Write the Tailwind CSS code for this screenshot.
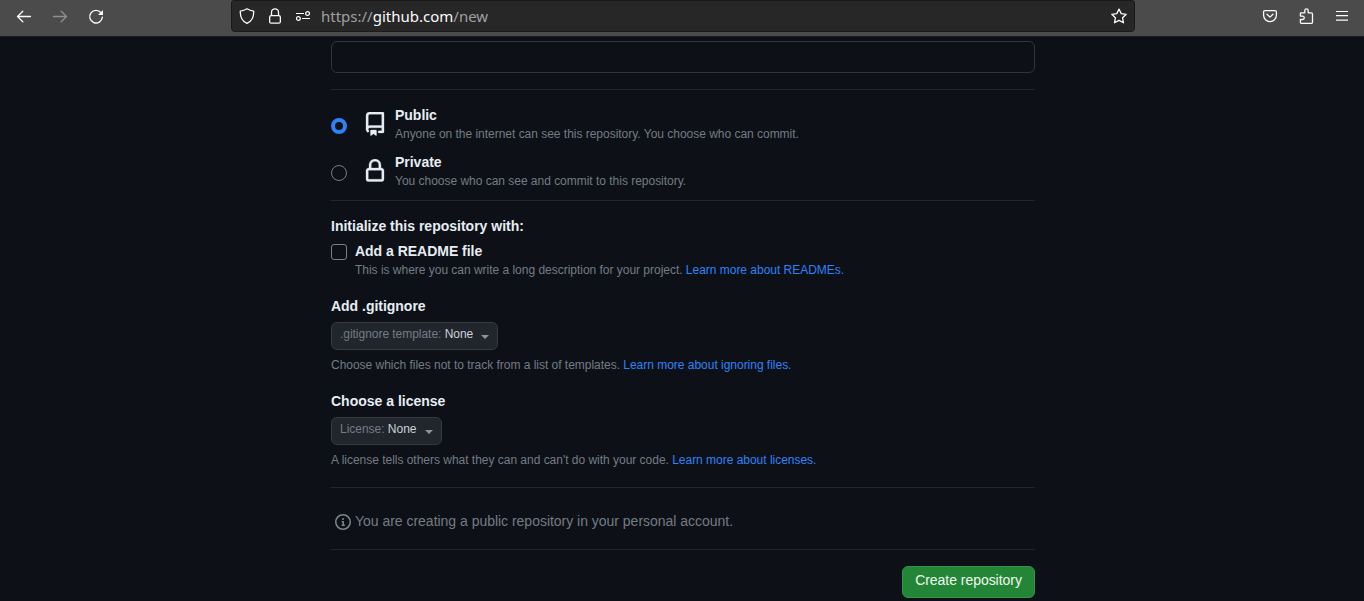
<!DOCTYPE html>
<html lang="en">
<head>
<meta charset="utf-8">
<title>Create a new repository</title>
<script src="https://cdn.jsdelivr.net/npm/@tailwindcss/browser@4"></script>
</head>
<body class="h-[601px] overflow-hidden bg-[#0d1117] font-['Liberation_Sans',Arial,sans-serif] text-[#e6edf3]">
<header class="flex h-[37px] border-b border-[#1c1c1e] bg-[#4b4b4b] text-[#fbfbfe]">
  <nav class="flex w-[231px] gap-5 pl-4 pt-[9px]">
    <svg class="size-4" viewBox="0 0 16 16" fill="none" stroke="currentColor" stroke-width="1.3" stroke-linecap="round" stroke-linejoin="round"><path d="M14.500 7.500H1.500M6.800 2.300 1.500 7.500l5.300 5.200"/></svg>
    <svg class="size-4 text-[#909090]" viewBox="0 0 16 16" fill="none" stroke="currentColor" stroke-width="1.3" stroke-linecap="round" stroke-linejoin="round"><path d="M1.500 7.500H14.500M9.200 2.300l5.300 5.200-5.300 5.200"/></svg>
    <svg class="size-4" viewBox="0 0 16 16" fill="none" stroke="currentColor" stroke-width="1.4" stroke-linecap="round"><path d="M13 3.800A6.300 6.300 0 1 0 14.300 8.300"/><path d="M15 1v5h-5Z" fill="currentColor" stroke="none"/></svg>
  </nav>
  <div class="flex h-8 w-[904px] rounded-b-[4px] rounded-t-[3px] border border-[#191919] bg-[#272727] pl-[7px]">
    <svg class="mt-[7px] size-4" viewBox="0 0 16 16" fill="none" stroke="currentColor" stroke-width="1.3" stroke-linejoin="round"><path d="M8 .8c2 1.300 4.300 2 6.700 2.300.2 5.500-1.700 10-6.700 12.200C3 13.100 1.100 8.600 1.300 3.100 3.700 2.800 6 2.100 8 .8Z"/></svg>
    <svg class="ml-3 mt-[7px] size-4" viewBox="0 0 16 16" fill="none" stroke="currentColor" stroke-width="1.3"><rect x="2.650" y="7.650" width="10.700" height="7.500" rx="1.500"/><path d="M4.500 7.500V4.300a3.500 3.500 0 0 1 7 0v3.200"/></svg>
    <svg class="ml-3 mt-[7px] size-4" viewBox="0 0 16 16" fill="none" stroke="currentColor" stroke-width="1.200"><path d="M1 5.500h8M7 10.500h8"/><circle cx="12.600" cy="5.500" r="1.900"/><circle cx="3.400" cy="10.500" r="1.900"/></svg>
    <div class="ml-[10px] mt-[4px] font-['Noto_Sans',sans-serif] text-[15px] leading-[22px] text-[#a0a0a2]">https://<span class="text-[#fbfbfe]">github.com</span>/new</div>
    <svg class="ml-auto mr-[7px] mt-[7px] size-4" viewBox="0 0 16 16" fill="none" stroke="currentColor" stroke-width="1.3" stroke-linejoin="round"><path d="m8 1.100 2.200 4.500 5 .7-3.600 3.500.9 5L8 12.400l-4.500 2.400.9-5L.8 6.300l5-.7Z"/></svg>
  </div>
  <div class="ml-auto flex gap-5 pr-[14px] pt-2">
    <svg class="size-4" viewBox="0 0 16 16" fill="none" stroke="currentColor" stroke-width="1.3" stroke-linecap="round" stroke-linejoin="round"><path d="M2.900 2.600h10.200c.8 0 1.300.5 1.300 1.300v3.300a6.400 6.400 0 0 1-12.800 0V3.900c0-.8.5-1.300 1.300-1.300ZM5 6.200l3 2.900 3-2.900"/></svg>
    <svg class="ml-[1px] size-4" viewBox="0 0 16 16" fill="none" stroke="currentColor" stroke-width="1.3" stroke-linejoin="round"><path d="M2 4.800h3.800V2.500a1.700 1.700 0 0 1 3.400 0v2.300h3.100c.7 0 1.200.5 1.200 1.200v8.200c0 .7-.5 1.200-1.200 1.200H2.600c-.7 0-1.200-.5-1.200-1.200v-2.700h2.200a1.700 1.700 0 0 0 0-3.400H1.400V5.400c0-.4.2-.6.6-.6Z"/></svg>
    <svg class="-ml-[1px] size-4" viewBox="0 0 16 16" fill="none" stroke="currentColor" stroke-width="1.200"><path d="M2 3.500h12M2 7.700h12M2 12.200h12"/></svg>
  </div>
</header>
<main class="ml-[331px] w-[704px] pt-1 text-[12px] leading-[18px] tracking-[-0.02px] text-[#747b84]">
  <input aria-label="Description" class="block h-8 w-full rounded-md border border-[#30363d] bg-[#0d1117]">
  <section class="mt-4 h-[111px] border-t border-[#21262d] pt-[14px]">
    <label class="flex h-[47px]">
      <span class="mt-[14px] size-4 rounded-full border-4 border-[#2f81f7]"></span>
      <svg class="ml-4 mt-2 size-6 fill-[#e6edf3] stroke-[#e6edf3]" stroke-width=".2" viewBox="0 0 16 16"><path d="M2 2.500A2.500 2.500 0 0 1 4.500 0h8.750a.75.75 0 0 1 .75.75v12.500a.75.75 0 0 1-.75.75h-2.500a.75.75 0 0 1 0-1.500h1.750v-2h-8a1 1 0 0 0-.714 1.700.75.75 0 1 1-1.072 1.050A2.495 2.495 0 0 1 2 11.500Zm10.500-1h-8a1 1 0 0 0-1 1v6.708A2.486 2.486 0 0 1 4.500 9h8ZM5 12.250a.25.25 0 0 1 .25-.25h3.500a.25.25 0 0 1 .25.25v3.250a.25.25 0 0 1-.4.2l-1.450-1.087a.249.249 0 0 0-.3 0L5.400 15.700a.25.25 0 0 1-.4-.2Z"/></svg>
      <span class="ml-2"><b class="block h-[21px] text-[14px] leading-[22px] text-[#e6edf3]">Public</b><span class="block">Anyone on the internet can see this repository. You choose who can commit.</span></span>
    </label>
    <label class="flex h-[47px]">
      <span class="mt-[14px] size-4 rounded-full border border-[#7b7d80]"></span>
      <svg class="ml-4 mt-2 size-6 fill-[#e6edf3] stroke-[#e6edf3]" stroke-width=".2" viewBox="0 0 16 16"><path d="M4 4a4 4 0 0 1 8 0v2h.25c.966 0 1.750.784 1.750 1.750v5.500A1.750 1.750 0 0 1 12.250 15h-8.500A1.750 1.750 0 0 1 2 13.250v-5.500C2 6.784 2.784 6 3.750 6H4Zm8.250 3.500h-8.500a.25.25 0 0 0-.25.25v5.500c0 .138.112.25.25.25h8.500a.25.25 0 0 0 .25-.25v-5.500a.25.25 0 0 0-.25-.25ZM10.500 6V4a2.500 2.500 0 1 0-5 0v2Z"/></svg>
      <span class="ml-2"><b class="block h-[21px] text-[14px] leading-[22px] text-[#e6edf3]">Private</b><span class="block">You choose who can see and commit to this repository.</span></span>
    </label>
  </section>
  <section class="h-[287px] border-t border-[#21262d] pt-[14px]">
    <h2 class="h-[25px] text-[14px] font-bold leading-[22px] tracking-normal text-[#e6edf3]">Initialize this repository with:</h2>
    <label class="flex h-[55px]">
      <span class="mt-1 size-4 rounded-[3px] border border-[#7b7d80]"></span>
      <span class="ml-2"><b class="block h-[21px] text-[14px] leading-[22px] text-[#e6edf3]">Add a README file</b><span class="block">This is where you can write a long description for your project. <a class="text-[#2f81f7]">Learn more about READMEs.</a></span></span>
    </label>
    <h2 class="h-[27px] text-[14px] font-bold leading-[22px] text-[#e6edf3]">Add .gitignore</h2>
    <button class="flex h-7 w-[167px] rounded-md border border-[#363b42] bg-[#21262d] pl-2 pt-[2px]"><span class="tracking-[-0.035px]">.gitignore template: <span class="text-[#c9d1d9]">None</span></span><span class="ml-auto mr-[8px] mt-[10px] border-x-4 border-t-4 border-x-transparent border-t-[#8b949e]"></span></button>
    <p class="mt-[6px] h-[34px]">Choose which files not to track from a list of templates. <a class="text-[#2f81f7]">Learn more about ignoring files.</a></p>
    <h2 class="h-[27px] text-[14px] font-bold leading-[22px] tracking-normal text-[#e6edf3]">Choose a license</h2>
    <button class="flex h-7 w-[111px] rounded-md border border-[#363b42] bg-[#21262d] pl-2 pt-[2px]"><span>License: <span class="text-[#c9d1d9]">None</span></span><span class="ml-auto mr-[8px] mt-[10px] border-x-4 border-t-4 border-x-transparent border-t-[#8b949e]"></span></button>
    <p class="mt-[6px]">A license tells others what they can and can't do with your code. <a class="text-[#2f81f7]">Learn more about licenses.</a></p>
  </section>
  <section class="flex h-[62px] border-t border-[#21262d] pl-1 pt-[22px] text-[14px] leading-[22px]">
    <svg class="mt-1 size-4 fill-[#7d858f]" viewBox="0 0 16 16"><path d="M0 8a8 8 0 1 1 16 0A8 8 0 0 1 0 8Zm8-6.500a6.500 6.500 0 1 0 0 13 6.500 6.500 0 0 0 0-13ZM6.500 7.750A.75.75 0 0 1 7.250 7h1a.75.75 0 0 1 .75.75v2.750h.25a.75.75 0 0 1 0 1.500h-2a.75.75 0 0 1 0-1.500h.25v-2h-.25a.75.75 0 0 1-.75-.75ZM8 6a1 1 0 1 1 0-2 1 1 0 0 1 0 2Z"/></svg>
    <span class="ml-1">You are creating a public repository in your personal account.</span>
  </section>
  <section class="flex justify-end border-t border-[#21262d] pt-4">
    <button class="h-8 w-[133px] whitespace-nowrap rounded-md border border-[#35914a] bg-[#238636] pb-1 text-[14px] leading-[22px] tracking-[-0.04px] text-[#f0f6f1]">Create repository</button>
  </section>
</main>
</body>
</html>
